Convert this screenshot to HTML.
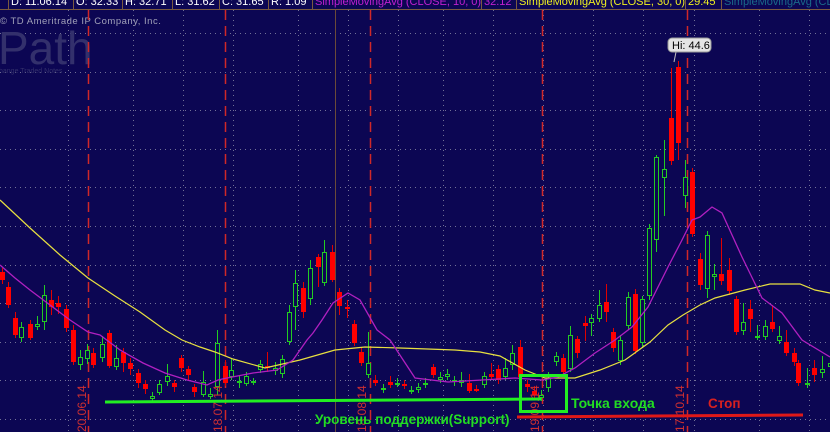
<!DOCTYPE html>
<html><head><meta charset="utf-8"><style>
html,body{margin:0;padding:0;background:#0c0653;}
body{width:830px;height:432px;overflow:hidden;position:relative;font-family:"Liberation Sans",sans-serif;}
svg{position:absolute;left:0;top:0}
</style></head><body>
<svg id="s" width="830" height="432" viewBox="0 0 830 432" xmlns="http://www.w3.org/2000/svg">
<rect width="830" height="432" fill="#0c0653"/>
<g id="grid" stroke="#8c8ca8" stroke-width="1" stroke-dasharray="1,4" opacity="0.8"></g>
<text x="-2" y="64" font-size="46" fill="#33306c" font-family="Liberation Sans">Path</text>
<text x="0" y="24" font-size="9.5" fill="#a0a0b8" letter-spacing="0.5">© TD Ameritrade IP Company, Inc.</text>
<text x="-1" y="73" font-size="7" fill="#33306c">hange Traded Notes</text>
<g id="vl"></g>
<g id="cd"></g>
<polyline id="ma30" fill="none" stroke="#e8e040" stroke-width="1.2"/>
<polyline id="ma10" fill="none" stroke="#b020c0" stroke-width="1.3"/>
<rect x="0" y="0" width="830" height="9" fill="#0c0653"/>
<line x1="0" y1="9.5" x2="830" y2="9.5" stroke="#7a5a40"/>
<g font-size="11" font-family="Liberation Sans">
<text x="11" y="5" fill="#ffffff">D: 11.06.14</text>
<text x="76" y="5" fill="#ffffff">O: 32.33</text>
<text x="125" y="5" fill="#ffffff">H: 32.71</text>
<text x="175" y="5" fill="#ffffff">L: 31.62</text>
<text x="222" y="5" fill="#ffffff">C: 31.65</text>
<text x="271" y="5" fill="#ffffff">R: 1.09</text>
<text x="315" y="5" fill="#c020d0">SimpleMovingAvg (CLOSE, 10, 0)</text>
<text x="484" y="5" fill="#c020d0">32.12</text>
<text x="519" y="5" fill="#f0f020">SimpleMovingAvg (CLOSE, 30, 0)</text>
<text x="688" y="5" fill="#f0f020">29.45</text>
<text x="724" y="5" fill="#1a6a8a">SimpleMovingAvg (CLOSE, 5</text>
</g>
<g stroke="#7a5a40" stroke-width="1">
<line x1="8.5" y1="0" x2="8.5" y2="9"/><line x1="73.5" y1="0" x2="73.5" y2="9"/><line x1="122.5" y1="0" x2="122.5" y2="9"/><line x1="172.5" y1="0" x2="172.5" y2="9"/><line x1="219.5" y1="0" x2="219.5" y2="9"/><line x1="268.5" y1="0" x2="268.5" y2="9"/><line x1="312.5" y1="0" x2="312.5" y2="9"/><line x1="481.5" y1="0" x2="481.5" y2="9"/><line x1="516.5" y1="0" x2="516.5" y2="9"/><line x1="685.5" y1="0" x2="685.5" y2="9"/><line x1="721.5" y1="0" x2="721.5" y2="9"/>
</g>
<line x1="676" y1="52" x2="674" y2="62" stroke="#c0c0c0"/>
<rect x="668" y="38" width="43" height="14" rx="4" fill="#e4e4e4" stroke="#999"/>
<text x="672" y="49" font-size="11" fill="#000">Hi: 44.6</text>
<g font-size="12" fill="#d03030" font-family="Liberation Sans">
<text transform="translate(86,432) rotate(-90)">20.06.14</text>
<text transform="translate(222,432) rotate(-90)">18.07.14</text>
<text transform="translate(366,432) rotate(-90)">18.08.14</text>
<text transform="translate(539,432) rotate(-90)">19.09.14</text>
<text transform="translate(684,432) rotate(-90)">17.10.14</text>
</g>
<line x1="105" y1="402" x2="541" y2="399" stroke="#22ee22" stroke-width="3"/>
<rect x="520.5" y="375.5" width="46" height="36" fill="none" stroke="#22ee22" stroke-width="3"/>
<line x1="517" y1="417" x2="803" y2="415" stroke="#e01818" stroke-width="3"/>
<text x="571" y="408" font-size="14" font-weight="bold" fill="#22dd22">Точка входа</text>
<text x="315" y="424" font-size="13.5" font-weight="bold" fill="#22dd22">Уровень поддержки(Support)</text>
<text x="708" y="408" font-size="13.5" font-weight="bold" fill="#d82020">Стоп</text>
</svg>
<script>
var NS="http://www.w3.org/2000/svg";
function el(p,t,a){var e=document.createElementNS(NS,t);for(var k in a)e.setAttribute(k,a[k]);p.appendChild(e);return e;}
var g=document.getElementById('grid');
[33,72,110,149,187,226,265,303,342,380,419].forEach(function(y){el(g,'line',{x1:0,y1:y+.5,x2:830,y2:y+.5});});
[68,133,183,233,298,348,398,443,493,543,593,643,694,759,809].forEach(function(x){el(g,'line',{x1:x+.5,y1:10,x2:x+.5,y2:432});});
var vl=document.getElementById('vl');
[88,225,370,542,687].forEach(function(x){el(vl,'line',{x1:x+.5,y1:10,x2:x+.5,y2:432,stroke:'#d02828','stroke-width':1.5,'stroke-dasharray':'10,6'});});
el(vl,'line',{x1:335.5,y1:10,x2:335.5,y2:432,stroke:'#6a4a38'});
var C=[[0,272,280,268,284,'r'],[6,287,305,282,308,'r'],[13,318,335,312,338,'r'],[19,327,338,322,342,'g'],[28,324,338,320,340,'r'],[35,324,327,316,330,'g'],[42,295,322,285,330,'g'],[49,300,307,290,315,'r'],[56,303,307,296,314,'r'],[64,309,328,305,332,'r'],[71,330,362,325,365,'r'],[78,357,365,350,370,'g'],[85,350,359,344,364,'g'],[91,353,365,348,368,'r'],[100,344,358,336,362,'g'],[107,333,366,330,368,'r'],[114,358,367,345,370,'g'],[121,352,363,348,372,'r'],[128,363,369,358,375,'r'],[136,373,383,369,388,'r'],[143,384,389,380,394,'r'],[150,396,399,392,401,'g'],[157,384,393,380,395,'g'],[165,376,382,364,386,'g'],[172,383,387,380,392,'r'],[179,358,368,355,372,'r'],[186,369,375,366,380,'r'],[192,387,392,384,397,'r'],[201,382,395,371,397,'g'],[208,394,397,388,399,'g'],[215,343,387,330,395,'g'],[223,366,383,360,386,'r'],[229,370,377,358,380,'g'],[237,381,383,376,388,'g'],[244,376,384,372,386,'g'],[251,381,383,378,385,'g'],[258,364,370,360,373,'g'],[265,366,368,352,372,'r'],[273,368,371,362,375,'g'],[280,359,374,355,378,'g'],[287,312,342,305,345,'g'],[293,283,307,270,330,'g'],[301,288,312,282,318,'r'],[308,268,299,260,305,'g'],[316,257,267,254,287,'r'],[322,252,283,240,286,'g'],[330,252,280,245,282,'r'],[337,292,306,288,315,'r'],[345,307,309,300,318,'r'],[352,324,343,320,346,'r'],[359,352,363,348,366,'r'],[366,363,375,332,378,'g'],[373,380,383,375,386,'r'],[381,388,390,384,393,'g'],[388,382,385,376,388,'r'],[395,383,384,378,387,'g'],[402,384,385,380,389,'r'],[409,390,392,386,394,'g'],[416,387,390,383,393,'g'],[423,383,385,378,388,'g'],[431,367,375,364,378,'r'],[438,377,380,372,383,'g'],[445,374,377,369,380,'g'],[452,380,382,376,386,'g'],[459,380,383,372,387,'g'],[467,383,391,374,393,'r'],[474,389,390,385,392,'r'],[482,376,385,372,388,'g'],[489,374,377,363,380,'r'],[496,369,380,365,384,'r'],[503,368,377,358,380,'g'],[510,353,365,345,370,'g'],[518,347,377,340,380,'r'],[525,384,387,380,392,'r'],[532,391,395,386,398,'r'],[539,395,398,390,401,'g'],[546,378,388,372,392,'g'],[554,356,362,352,366,'g'],[561,358,372,354,375,'r'],[568,335,369,326,372,'g'],[575,339,353,336,358,'r'],[583,323,326,316,341,'r'],[589,318,323,314,336,'g'],[597,305,319,290,322,'g'],[604,302,312,284,322,'r'],[611,332,348,328,352,'r'],[618,340,361,335,365,'g'],[626,297,326,292,330,'g'],[633,294,351,289,354,'r'],[640,299,343,296,348,'g'],[647,228,296,224,300,'g'],[654,157,240,155,252,'g'],[662,169,178,140,216,'g'],[669,118,161,68,165,'r'],[676,67,143,61,160,'r'],[683,177,196,160,208,'g'],[690,172,234,168,237,'r'],[698,259,285,253,290,'r'],[705,235,289,231,298,'g'],[712,274,277,264,290,'g'],[719,274,281,238,285,'r'],[727,270,291,258,295,'r'],[734,299,332,296,335,'r'],[741,322,331,303,335,'g'],[748,309,319,300,332,'r'],[755,336,338,325,340,'g'],[763,326,337,320,340,'g'],[770,322,329,305,332,'r'],[777,336,341,326,344,'g'],[784,342,353,330,356,'r'],[792,353,362,348,366,'r'],[796,363,383,360,386,'r'],[805,383,384,368,388,'g'],[812,368,375,360,382,'r'],[820,369,373,356,378,'g'],[828,363,367,352,372,'g']];
var cd=document.getElementById('cd');
C.forEach(function(c){var x=c[0]+2.5,col=c[5]=='r'?'#ff0000':'#22cc22';
el(cd,'line',{x1:x,y1:c[3],x2:x,y2:c[4],stroke:c[5]=='r'?'#e00000':'#22cc22','stroke-width':1});
if(c[5]=='r')el(cd,'rect',{x:c[0],y:c[1],width:5,height:Math.max(2,c[2]-c[1]),fill:col});
else el(cd,'rect',{x:c[0]+.5,y:c[1]+.5,width:4,height:Math.max(1,c[2]-c[1]-1),fill:'#0c0653',stroke:col,'stroke-width':1});});
document.getElementById('ma30').setAttribute('points',"0,200 30,228 60,255 88,278 115,296 140,312 165,330 182,340 200,347 215,352 233,359 265,368 300,360 335,350 365,347 400,348 455,350 480,352 500,356 525,370 545,378 575,378 600,370 625,360 650,342 668,325 683,315 700,305 715,298 745,290 770,284 800,284 815,290 830,293");
document.getElementById('ma10').setAttribute('points',"0,265 15,278 30,290 50,305 70,320 88,332 100,335 120,350 143,363 165,373 187,380 207,385 218,380 227,378 253,373 277,370 293,360 307,340 313,333 322,320 333,303 348,293 360,300 377,330 390,340 415,378 448,382 482,380 515,378 542,380 558,377 575,368 595,353 615,340 632,327 648,307 668,267 682,240 692,220 700,217 712,207 722,213 742,257 762,298 782,313 802,340 830,357");
</script>
</body></html>
